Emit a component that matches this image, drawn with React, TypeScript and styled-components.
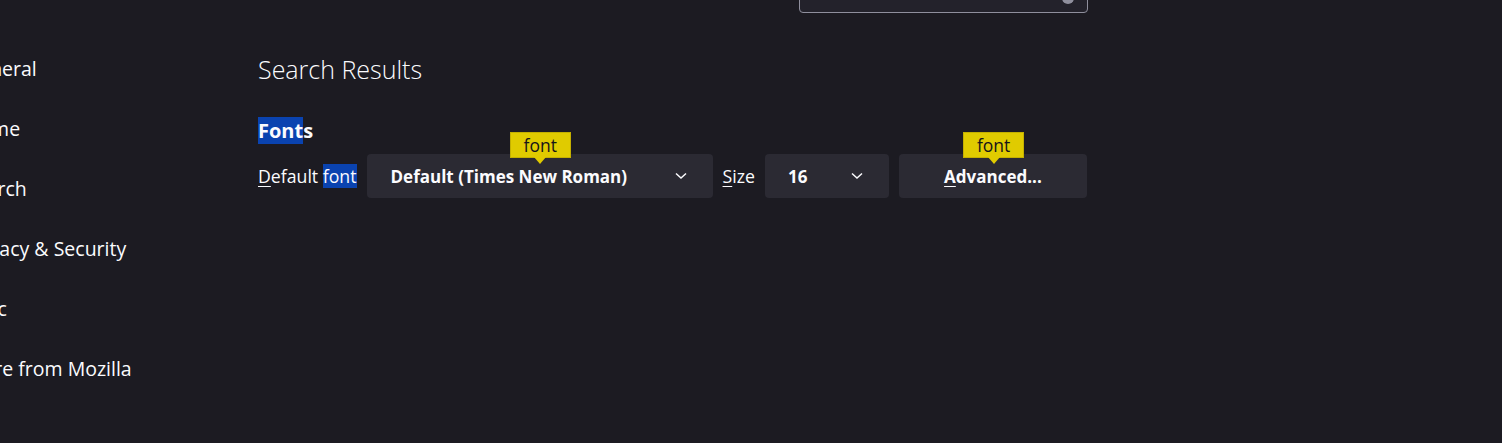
import React from "react";
import styled, { createGlobalStyle } from "styled-components";

const Global = createGlobalStyle`
  html, body { margin: 0; padding: 0; background: #1c1b22; overflow: hidden; }
  body { font-family: "Open Sans", "Noto Sans", sans-serif; color: #fbfbfe; }
`;

const Page = styled.div`
  display: grid;
  grid-template-columns: 258px 830px 1fr;
  width: 1502px;
  height: 443px;
  background: #1c1b22;
  overflow: hidden;
`;

const Sidebar = styled.nav`
  display: flex;
  flex-direction: column;
  padding-top: 38px;
  margin-left: -35px;
  min-width: 0;
`;

const NavItem = styled.div`
  height: 60px;
  display: flex;
  align-items: center;
  font-size: 19.5px;
  color: #fbfbfe;
  white-space: nowrap;
`;

const Main = styled.main`
  display: flex;
  flex-direction: column;
`;

const SearchBox = styled.div`
  position: relative;
  align-self: flex-end;
  width: 289px;
  height: 32px;
  margin-top: -19px;
  box-sizing: border-box;
  border: 1px solid #8f8f9d;
  border-radius: 4px;
  background: #23222b;
`;

const ClearDot = styled.div`
  position: absolute;
  right: 13px;
  top: 16px;
  width: 12px;
  height: 6px;
  border-radius: 0 0 6px 6px;
  background: #8f8f9d;
`;

const Heading = styled.h1`
  margin: 40px 0 0 0;
  font-size: 25px;
  font-weight: 300;
  line-height: 32px;
  color: #fbfbfe;
`;

const SectionTitle = styled.h2`
  margin: 32px 0 0 0;
  font-size: 20px;
  font-weight: 700;
  line-height: 28px;
  color: #fbfbfe;
`;

const Highlight = styled.span`
  background: #0a43b0;
`;

const Row = styled.div`
  display: flex;
  align-items: center;
  gap: 10px;
  margin-top: 9px;
`;

const Label = styled.label`
  font-size: 17.7px;
  line-height: 24px;
  color: #fbfbfe;
  white-space: nowrap;
`;

const Access = styled.span`
  text-decoration: underline;
  text-underline-offset: 3px;
`;

const Anchor = styled.div`
  position: relative;
`;

const Select = styled.div<{ $w: number; $pl: number }>`
  position: relative;
  width: ${(p) => p.$w}px;
  height: 44px;
  box-sizing: border-box;
  display: flex;
  align-items: center;
  padding-left: ${(p) => p.$pl}px;
  border-radius: 4px;
  background: #2b2a33;
  font-size: 17px;
  font-weight: 700;
  color: #fbfbfe;
`;

const Chevron = styled.svg`
  position: absolute;
  right: 26px;
  top: 18px;
`;

const Button = styled.div`
  position: relative;
  width: 188px;
  height: 44px;
  box-sizing: border-box;
  display: flex;
  align-items: center;
  justify-content: center;
  border-radius: 4px;
  background: #2b2a33;
  font-size: 17px;
  font-weight: 700;
  color: #fbfbfe;
`;

const Tip = styled.div<{ $left: number }>`
  position: absolute;
  left: ${(p) => p.$left}px;
  top: -22px;
  z-index: 2;
  padding: 0 13px;
  height: 26px;
  line-height: 25px;
  box-sizing: border-box;
  background: #e0cb00;
  border: 1px solid #c4b000;
  color: #15141a;
  font-size: 17.5px;
  font-weight: 400;
  &::after {
    content: "";
    position: absolute;
    left: 50%;
    bottom: -7px;
    margin-left: -6px;
    border-left: 6px solid transparent;
    border-right: 6px solid transparent;
    border-top: 7px solid #e0cb00;
  }
`;

const ChevronIcon = () => (
  <Chevron width="12" height="8" viewBox="0 0 12 8">
    <path d="M1 1.5 L6 6 L11 1.5" fill="none" stroke="#fbfbfe" strokeWidth="1.5" />
  </Chevron>
);

export default function App() {
  return (
    <>
      <Global />
      <Page>
        <Sidebar>
          <NavItem>General</NavItem>
          <NavItem>Home</NavItem>
          <NavItem>Search</NavItem>
          <NavItem>Privacy &amp; Security</NavItem>
          <NavItem>Sync</NavItem>
          <NavItem>More from Mozilla</NavItem>
        </Sidebar>
        <Main>
          <SearchBox>
            <ClearDot />
          </SearchBox>
          <Heading>Search Results</Heading>
          <SectionTitle>
            <Highlight>Font</Highlight>s
          </SectionTitle>
          <Row>
            <Label>
              <Access>D</Access>efault <Highlight>font</Highlight>
            </Label>
            <Anchor>
              <Tip $left={143}>font</Tip>
              <Select $w={346} $pl={24}>
                Default (Times New Roman)
                <ChevronIcon />
              </Select>
            </Anchor>
            <Label>
              <Access>S</Access>ize
            </Label>
            <Select $w={124} $pl={23}>
              16
              <ChevronIcon />
            </Select>
            <Button>
              <Tip $left={64}>font</Tip>
              <span>
                <Access>A</Access>dvanced...
              </span>
            </Button>
          </Row>
        </Main>
        <div />
      </Page>
    </>
  );
}
